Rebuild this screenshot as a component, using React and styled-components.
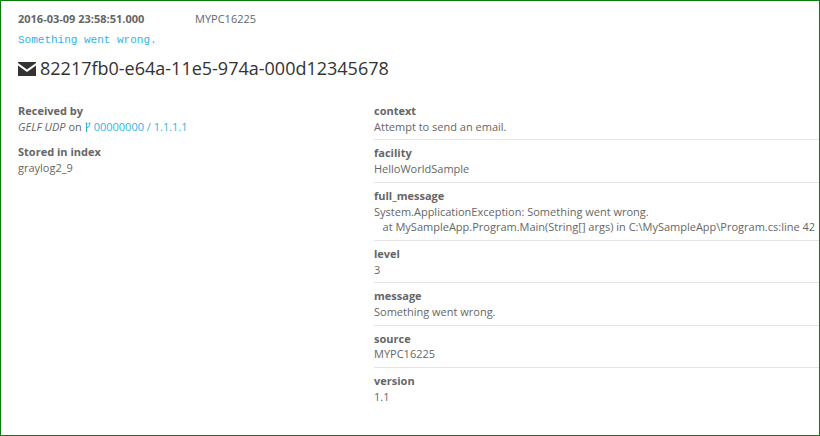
import React from 'react'
import styled, { createGlobalStyle } from 'styled-components'

const GlobalStyle = createGlobalStyle`
  html, body { margin: 0; padding: 0; background: #fff; }
  body { font-family: "Open Sans", sans-serif; font-size: 11px; line-height: 1.42857; color: #666; }
`

const Frame = styled.div`
  box-sizing: border-box;
  width: 820px;
  height: 436px;
  border: 1px solid #0a7d0a;
  padding: 10px 0 0 17px;
  overflow: hidden;
`

const MetaRow = styled.div`
  display: flex;
  height: 16px;
`

const Timestamp = styled.span`
  width: 177px;
  font-weight: 700;
`

const Message = styled.div`
  margin-top: 6px;
  height: 15px;
  font-family: "Liberation Mono", monospace;
  font-size: 11px;
  line-height: 15px;
  color: #2fb4e6;
`

const Title = styled.h2`
  display: flex;
  align-items: center;
  gap: 4px;
  margin: 8px 0 0;
  font-size: 18px;
  font-weight: 400;
  line-height: 24px;
  color: #333;
  svg { width: 18px; height: 14px; margin-top: 2px; }
`

const Columns = styled.div`
  display: grid;
  grid-template-columns: 356px 1fr;
  margin-top: 23px;
`

const Label = styled.div`
  font-weight: 700;
`

const Block = styled.div`
  margin-bottom: 10px;
`

const Link = styled.span`
  color: #2fb4e6;
  svg { width: 6px; height: 11px; vertical-align: -2px; margin-right: 3px; }
`

const Field = styled.div`
  padding-bottom: 5px;
  margin-bottom: 5px;
  border-bottom: ${(p) => (p.$last ? 'none' : '1px solid #e5e5e5')};
`

const Value = styled.div`
  white-space: pre;
`

const EnvelopeIcon = () => (
  <svg viewBox="0 0 18 14" fill="currentColor">
    <path d="M0 0h18v1L9 7.5 0 1z" />
    <path d="M0 3.5 9 10l9-6.5V14H0z" />
  </svg>
)

const ForkIcon = () => (
  <svg viewBox="0 0 6 11" fill="none" stroke="currentColor">
    <path d="M1.5 2v8" />
    <path d="M4.5 2.5v1c0 1.5-3 1.5-3 3" />
    <circle cx="1.5" cy="1.5" r="1" fill="currentColor" stroke="none" />
    <circle cx="4.5" cy="1.5" r="1" fill="currentColor" stroke="none" />
  </svg>
)

const fields = [
  ['context', 'Attempt to send an email.'],
  ['facility', 'HelloWorldSample'],
  ['full_message', 'System.ApplicationException: Something went wrong.\n   at MySampleApp.Program.Main(String[] args) in C:\\MySampleApp\\Program.cs:line 42'],
  ['level', '3'],
  ['message', 'Something went wrong.'],
  ['source', 'MYPC16225'],
  ['version', '1.1'],
]

export default function App() {
  return (
    <>
      <GlobalStyle />
      <Frame>
        <MetaRow>
          <Timestamp>2016-03-09 23:58:51.000</Timestamp>
          <span>MYPC16225</span>
        </MetaRow>
        <Message>Something went wrong.</Message>
        <Title><EnvelopeIcon />82217fb0-e64a-11e5-974a-000d12345678</Title>
        <Columns>
          <div>
            <Block>
              <Label>Received by</Label>
              <div><em>GELF UDP</em> on <Link><ForkIcon />00000000 / 1.1.1.1</Link></div>
            </Block>
            <Block>
              <Label>Stored in index</Label>
              <div>graylog2_9</div>
            </Block>
          </div>
          <div>
            {fields.map(([name, value], i) => (
              <Field key={name} $last={i === fields.length - 1}>
                <Label>{name}</Label>
                <Value>{value}</Value>
              </Field>
            ))}
          </div>
        </Columns>
      </Frame>
    </>
  )
}
